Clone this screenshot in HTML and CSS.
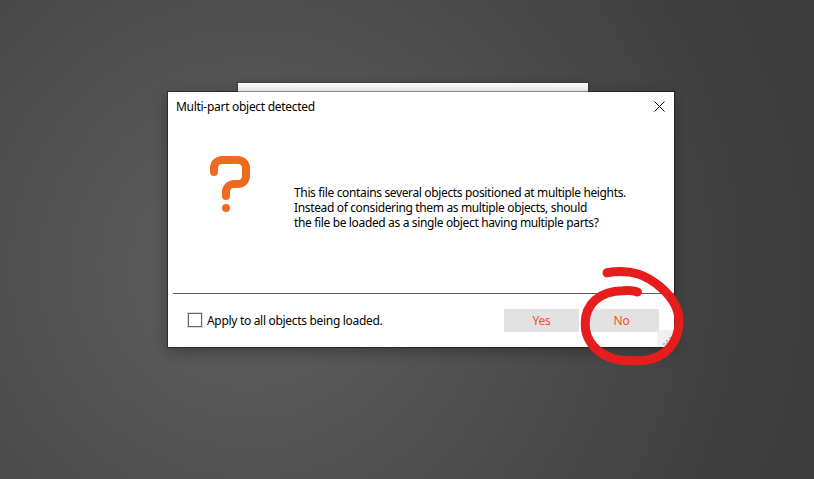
FILE: index.html
```html
<!DOCTYPE html>
<html lang="en">
<head>
<meta charset="utf-8">
<title>Multi-part object detected</title>
<link rel="stylesheet" href="styles.css">
</head>
<body>
<div class="window-behind"></div>
<main class="dialog">
  <header class="titlebar">
    <h1 class="title">Multi-part object detected</h1>
    <svg class="close" width="11" height="11" viewBox="0 0 11 11"><path d="M.5.5l10 10M10.5.5l-10 10"/></svg>
  </header>
  <section class="content">
    <svg class="question" width="40" height="57" viewBox="0 0 40 57"><path d="M4 16v-4a8 8 0 0 1 8-8h16a8 8 0 0 1 8 8v8a8 8 0 0 1-8 8h-4a8 8 0 0 0-8 8v4"/><circle cx="16" cy="52" r="4"/></svg>
    <p class="message">This file contains several objects positioned at multiple heights.<br>Instead of considering them as multiple objects, should<br>the file be loaded as a single object having multiple parts?</p>
  </section>
  <footer class="footer">
    <label class="apply"><span class="box"></span><span class="apply-text">Apply to all objects being loaded.</span></label>
    <button class="btn">Yes</button>
    <button class="btn">No</button>
  </footer>
  <svg class="grip" width="17" height="17" viewBox="0 0 17 17"><path d="M12 7h2v2h-2zM9 10h2v2H9zM12 10h2v2h-2zM6 13h2v2H6zM9 13h2v2H9zM12 13h2v2h-2z"/></svg>
</main>
<svg class="marker" width="814" height="479" viewBox="0 0 814 479"><path d="M607 272.800C615 271.500 628 271 638 274C646 276.500 654 281.500 661 287.500C673 298 679 309 679 321C679 342 666 358 644 360.500C636 361 625 361.500 615 359.200C597 354 585 341 585.200 324C585 304 600 291 623 290.800C629 290.300 634 290.700 637.500 292"/></svg>
</body>
</html>
```
FILE: styles.css
```css
* { box-sizing: border-box; }
body {
  margin: 0;
  width: 814px;
  height: 479px;
  overflow: hidden;
  padding-top: 83px;
  font: 12px/15px "Noto Sans", "Open Sans", sans-serif;
  color: #000;
  background: radial-gradient(circle at 250px 268px, #5e5e5e 0, #4d4d4d 290px, #3d3d3d 540px, #3b3b3b 620px);
}
.window-behind {
  width: 350px;
  height: 9px;
  margin-left: 238px;
  background: linear-gradient(#fff, #f2f2f2);
  box-shadow: 0 0 0 1px rgba(0,0,0,.15), 0 1px 8px rgba(0,0,0,.2);
}
.dialog {
  position: relative;
  display: flex;
  flex-direction: column;
  width: 506px;
  height: 255px;
  margin-left: 168px;
  background: #fff;
  box-shadow: 0 0 0 1px rgba(0,0,0,.4), 0 4px 14px rgba(0,0,0,.32);
}
.titlebar {
  display: flex;
  align-items: center;
  justify-content: space-between;
  height: 29px;
  padding: 0 9.5px 0 8px;
}
.title { margin: 0 0 1px; font-size: 12px; font-weight: 400; letter-spacing: -.29px; white-space: nowrap; }
.close { fill: none; stroke: #000; stroke-width: 1; }
.content {
  display: flex;
  align-items: flex-start;
  flex: 1;
  margin: 0 0 0 5px;
  padding: 35px 0 0 37px;
  border-bottom: 1px solid #606060;
}
.question { flex: none; fill: none; stroke: #ed6b21; stroke-width: 8; stroke-linecap: round; }
.question circle { fill: #ed6b21; stroke: none; }
.message { margin: 29px 0 0 44px; letter-spacing: -.355px; white-space: nowrap; }
.footer {
  display: flex;
  align-items: center;
  gap: 5px;
  height: 53px;
  padding: 0 15px 0 20px;
}
.apply { display: flex; align-items: center; gap: 5px; flex: 1; }
.box { width: 14px; height: 14px; margin-bottom: 2px; border: 1px solid #666; box-shadow: 0 0 0 1px #ddd; }
.apply-text { letter-spacing: -.31px; white-space: nowrap; }
.btn {
  width: 75px;
  height: 23px;
  padding: 0;
  border: 0;
  background: #e2e2e2;
  color: #fb4e19;
  font: inherit;
  letter-spacing: -.2px;
}
.grip { position: absolute; right: 0; bottom: 0; background: #f0f0f0; fill: #b9b9b9; }
.marker { position: absolute; left: 0; top: 0; fill: none; stroke: #e71d1d; stroke-width: 9; stroke-linecap: round; pointer-events: none; }
```
